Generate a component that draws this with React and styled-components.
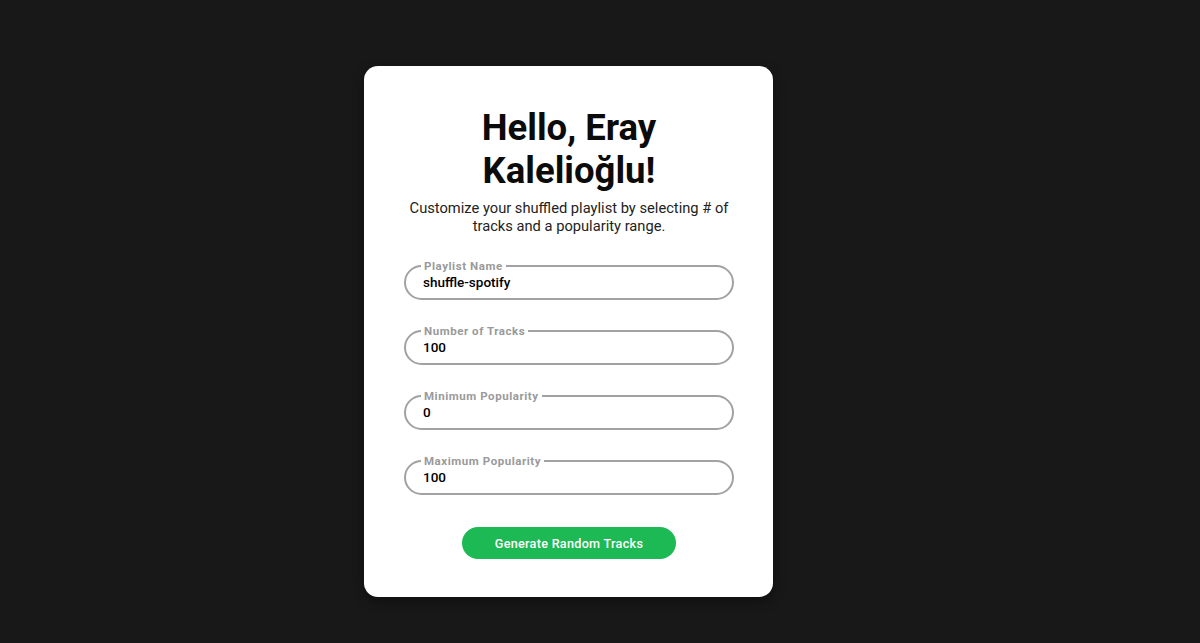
import styled, { createGlobalStyle } from "styled-components";

const GlobalStyle = createGlobalStyle`
  html, body {
    margin: 0;
    padding: 0;
    background: #181818;
    font-family: Roboto, "Liberation Sans", sans-serif;
  }
`;

const Page = styled.div`
  min-height: 643px;
  box-sizing: border-box;
  padding: 66px 0 0 364px;
`;

const Card = styled.div`
  width: 409px;
  box-sizing: border-box;
  padding: 40px 39px 38px 40px;
  background: #ffffff;
  border-radius: 14px;
  box-shadow: 0 4px 12px rgba(0, 0, 0, 0.4);
  display: flex;
  flex-direction: column;
  align-items: center;
`;

const Title = styled.h1`
  margin: 0;
  font-size: 36.5px;
  line-height: 43px;
  font-weight: 700;
  color: #0b0b0b;
  text-align: center;
  width: 240px;
`;

const Subtitle = styled.p`
  margin: 8px 0 24px;
  font-size: 14.7px;
  line-height: 17.5px;
  color: #222;
  text-align: center;
`;

const Form = styled.div`
  display: flex;
  flex-direction: column;
  gap: 24px;
  width: 330px;
`;

const Field = styled.fieldset`
  margin: 0;
  height: 41px;
  box-sizing: border-box;
  padding: 0 17px;
  border: 2px solid #a2a2a2;
  border-radius: 18px;
`;

const Legend = styled.legend`
  padding: 0 3px;
  margin-left: -2px;
  font-family: Roboto, "Liberation Sans", sans-serif;
  font-size: 11.5px;
  font-weight: 700;
  letter-spacing: 0.55px;
  color: #9a9a9a;
  line-height: 14px;
`;

const Input = styled.input`
  display: block;
  width: 100%;
  border: none;
  outline: none;
  padding: 1px 0 0;
  background: transparent;
  font-family: inherit;
  font-size: 13.5px;
  font-weight: 500;
  color: #000;
`;

const Button = styled.button`
  margin-top: 32px;
  width: 214px;
  height: 32px;
  border: none;
  border-radius: 16px;
  background: #1db954;
  color: #fff;
  font-family: inherit;
  font-size: 12.6px;
  font-weight: 500;
  letter-spacing: 0.3px;
  cursor: pointer;
`;

const fields = [
  { label: "Playlist Name", value: "shuffle-spotify" },
  { label: "Number of Tracks", value: "100" },
  { label: "Minimum Popularity", value: "0" },
  { label: "Maximum Popularity", value: "100" },
];

export default function App() {
  return (
    <>
      <GlobalStyle />
      <Page>
        <Card>
          <Title>Hello, Eray Kalelioğlu!</Title>
          <Subtitle>
            Customize your shuffled playlist by selecting # of tracks and a
            popularity range.
          </Subtitle>
          <Form>
            {fields.map((f) => (
              <Field key={f.label}>
                <Legend>{f.label}</Legend>
                <Input defaultValue={f.value} />
              </Field>
            ))}
          </Form>
          <Button>Generate Random Tracks</Button>
        </Card>
      </Page>
    </>
  );
}
